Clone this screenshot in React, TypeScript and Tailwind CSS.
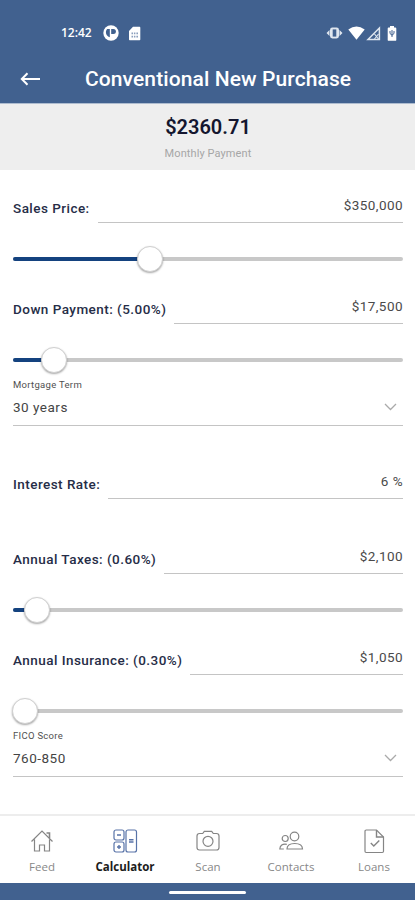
import { ReactNode, useState } from "react";

const StatusBar = () => (
  <div className="flex h-[57px] items-end justify-between pl-[61px] pr-[18px] pb-[15px]">
    <div className="flex h-[18px] items-center">
      <span className="w-[42px] font-['Open_Sans',sans-serif] text-[12px] leading-[18px] font-semibold">
        12:42
      </span>
      <svg className="h-[16px] w-[16px]" viewBox="0 0 16 16">
        <circle cx="8" cy="8" r="7.7" fill="#fff" />
        <path d="M4.2 4h2.6v8.2A5 5 0 0 1 4.2 4Z" fill="#41618f" />
        <path d="M8.2 4h2.2a2.5 2.5 0 0 1 0 5H8.2z" fill="#41618f" />
      </svg>
      <svg className="ml-[9px] h-[15px] w-[13px]" viewBox="0 0 13 15">
        <path
          d="M5 .8h6.3c.6 0 1 .4 1 1v11.4c0 .6-.4 1-1 1H2c-.6 0-1-.4-1-1V5z"
          fill="#fff"
        />
        <path
          d="M3.5 6.6h1.6v1.6H3.5zM6 6.6h1.4v1.6H6zM8.4 6.6H10v1.6H8.4zM3.5 9.8h1.6v1.6H3.5zM6 9.8h1.4v1.6H6zM8.4 9.8H10v1.6H8.4z"
          fill="#8b9fbd"
        />
      </svg>
    </div>
    <div className="flex h-[18px] items-center">
      <svg className="h-[12px] w-[17px]" viewBox="0 0 17 12">
        <path d="M.5 6 3.5 3v6zM16.5 6l-3-3v6z" fill="#dfe6ef" />
        <rect x="4" y=".6" width="9" height="10.8" rx="2.4" fill="#dfe6ef" />
        <rect x="6.7" y="2.4" width="3.6" height="7.2" fill="#41618f" />
      </svg>
      <svg className="ml-[5px] h-[14px] w-[17px]" viewBox="0 0 17 14">
        <path d="M.3 3.6Q8.5-2.4 16.7 3.6L8.5 13.8z" fill="#fff" />
      </svg>
      <svg className="ml-[1px] h-[15px] w-[15px]" viewBox="0 0 15 15">
        <path
          d="M13.4 2 2 13.4h11.4z"
          fill="none"
          stroke="#dfe6ef"
          strokeWidth="1.5"
        />
        <path d="m8.5 8 4 5M12.5 8l-4 5" stroke="#dfe6ef" strokeWidth="1.2" />
      </svg>
      <svg className="ml-[6px] h-[15px] w-[10px]" viewBox="0 0 10 15">
        <path
          d="M3 0h4v1.5h1.4c.5 0 .9.4.9.9v11.5c0 .5-.4.9-.9.9H1.6c-.5 0-.9-.4-.9-.9V2.4c0-.5.4-.9.9-.9H3z"
          fill="#fff"
        />
        <path
          d="M3 5v2.5L5 9.2 7 7.5V5M5 4v7"
          fill="none"
          stroke="#41618f"
          strokeWidth="1"
        />
      </svg>
    </div>
  </div>
);

type FieldProps = {
  label: string;
  value: string;
  height: string;
};

const Field = ({ label, value, height }: FieldProps) => (
  <div className={`flex items-end ${height}`}>
    <label className="shrink-0 pr-2 pb-[6px] text-[13.5px] leading-[18px] font-medium tracking-[0.46px] text-[#262d47]">
      {label}
    </label>
    <div className="h-[27px] flex-1 border-b border-[#c4c4c4] text-right text-[13.5px] leading-[18px] tracking-[0.45px] text-[#4a4a4a]">
      {value}
    </div>
  </div>
);

const Slider = ({ percent }: { percent: number }) => {
  const position = `calc(12px + (100% - 24px) * ${percent / 100})`;

  return (
    <div className="relative mt-[23px] flex h-[26px] items-center">
      <div className="h-1 w-full overflow-hidden rounded-sm bg-[#c8c8c8]">
        <div className="h-full bg-[#14427f]" style={{ width: position }} />
      </div>
      <div
        className="absolute top-0 h-[26px] w-[26px] -translate-x-1/2 rounded-full border border-[#d0d0d0] bg-white shadow-[0_1px_2px_rgba(0,0,0,0.35)]"
        style={{ left: position }}
      />
    </div>
  );
};

const SelectField = ({ label, value }: { label: string; value: string }) => (
  <div className="flex h-[53px] flex-col border-b border-[#c4c4c4] pt-[6px]">
    <span className="text-[9.5px] leading-[12px] tracking-[0.3px] text-[#505050]">
      {label}
    </span>
    <div className="flex items-center justify-between pt-[7px] pr-[6px]">
      <span className="text-[13.5px] leading-[18px] tracking-[0.5px] text-[#444]">
        {value}
      </span>
      <svg
        className="h-[8px] w-[13px]"
        viewBox="0 0 13 8"
        fill="none"
        stroke="#aaa"
        strokeWidth="1.3"
      >
        <path d="m1 1 5.5 5.5L12 1" />
      </svg>
    </div>
  </div>
);

const icons: Record<string, ReactNode> = {
  Feed: (
    <>
      <path d="M1.5 12.5 12 2l10.500 10.500M4.500 10.500V22h5v-6h5v6h5V10.500" />
      <path d="M16.5 4h3v5" strokeWidth="1.6" />
    </>
  ),
  Calculator: (
    <>
      <rect x="1" y="1" width="10" height="10" rx="2" />
      <rect x="1" y="13" width="10" height="10" rx="2" />
      <rect x="13" y="1" width="10.5" height="22" rx="2" />
      <path d="M4 6h4M4 18h4M6 16v4M16 10.8h4.5M16 13h4.5" strokeWidth="1.4" />
    </>
  ),
  Scan: (
    <>
      <path d="M3.5 4.5h3.2l1.6-2.2h7.4l1.6 2.2h3.2Q23 4.5 23 7v11.5q0 2.500-2.500 2.500h-17Q1 21 1 18.500V7q0-2.500 2.500-2.500Z" />
      <circle cx="12" cy="12.3" r="5" />
    </>
  ),
  Contacts: (
    <>
      <circle cx="15.5" cy="7.5" r="4.3" />
      <circle cx="6.2" cy="9.5" r="3" />
      <path d="M8 20c0-4 3-5.5 7.7-5.5s7.8 1.5 7.8 5.5ZM7.8 15.300C3.500 14.500 1 16.500.8 20h4" />
    </>
  ),
  Loans: (
    <>
      <path d="M14.5 1H4.2Q3 1 3 2.2v20.1q0 1.200 1.200 1.200h16.100q1.200 0 1.200-1.200V8Z" />
      <path d="M14.5 1v7h7M8.8 14l3 3 5.500-5.500" strokeWidth="1.4" />
    </>
  ),
};

const TabBar = () => {
  const [active, setActive] = useState("Calculator");

  return (
    <nav className="flex h-[69px] border-t-2 border-[#ededed] bg-white">
      {Object.keys(icons).map((name) => (
        <button
          key={name}
          className="flex flex-1 flex-col items-center pt-[13px]"
          onClick={() => setActive(name)}
        >
          <svg
            className={`ml-[2px] h-[25px] w-[25px] ${
              active === name ? "text-[#5873a8]" : "text-[#858585]"
            }`}
            viewBox="0 0 25 25"
            fill="none"
            stroke="currentColor"
            strokeWidth="1.2"
          >
            {icons[name]}
          </svg>
          <span
            className={`pt-[5px] pl-px font-['Open_Sans',sans-serif] text-[11.5px] leading-[15px] ${
              active === name ? "font-bold text-[#1c1c1c]" : "text-[#888]"
            }`}
          >
            {name}
          </span>
        </button>
      ))}
    </nav>
  );
};

const App = () => {
  return (
    <div className="flex h-[900px] w-[415px] flex-col overflow-hidden bg-white font-['Roboto',sans-serif]">
      <header className="h-[104px] shrink-0 border-b border-[#aebccf] bg-[#41618f] text-white">
        <StatusBar />
        <div className="flex h-[43px] items-center">
          <svg
            className="ml-[20px] h-[14px] w-[21px]"
            viewBox="0 0 21 14"
            fill="none"
            stroke="#fff"
            strokeWidth="2"
          >
            <path d="M20 7H2M7.5 1.3 1.8 7l5.7 5.7" />
          </svg>
          <h1 className="ml-[44px] text-[21px] leading-6 font-medium tracking-[0.1px] whitespace-nowrap">
            Conventional New Purchase
          </h1>
        </div>
      </header>

      <section className="flex h-[66px] shrink-0 flex-col items-center bg-[#eee] pt-[10px]">
        <div className="pl-px text-[20px] leading-[26px] font-semibold text-[#14162f]">
          $2360.71
        </div>
        <div className="pt-[7px] pl-px text-[11px] leading-[14px] tracking-[0.1px] text-[#a6a6a6]">
          Monthly Payment
        </div>
      </section>

      <main className="flex-1 pr-[12px] pl-[13px]">
        <Field label="Sales Price:" value="$350,000" height="h-[53px]" />
        <Slider percent={34.1} />
        <Field label="Down Payment: (5.00%)" value="$17,500" height="h-[52px]" />
        <Slider percent={7.8} />
        <SelectField label="Mortgage Term" value="30 years" />
        <Field label="Interest Rate:" value="6 %" height="h-[73px]" />
        <Field label="Annual Taxes: (0.60%)" value="$2,100" height="h-[75px]" />
        <Slider percent={3.2} />
        <Field
          label="Annual Insurance: (0.30%)"
          value="$1,050"
          height="h-[52px]"
        />
        <Slider percent={0} />
        <SelectField label="FICO Score" value="760-850" />
      </main>

      <TabBar />
      <footer className="flex h-[17px] shrink-0 justify-center bg-[#41618f] pt-[8px]">
        <div className="h-[3px] w-[77px] rounded-full bg-white" />
      </footer>
    </div>
  );
};

export default App;
